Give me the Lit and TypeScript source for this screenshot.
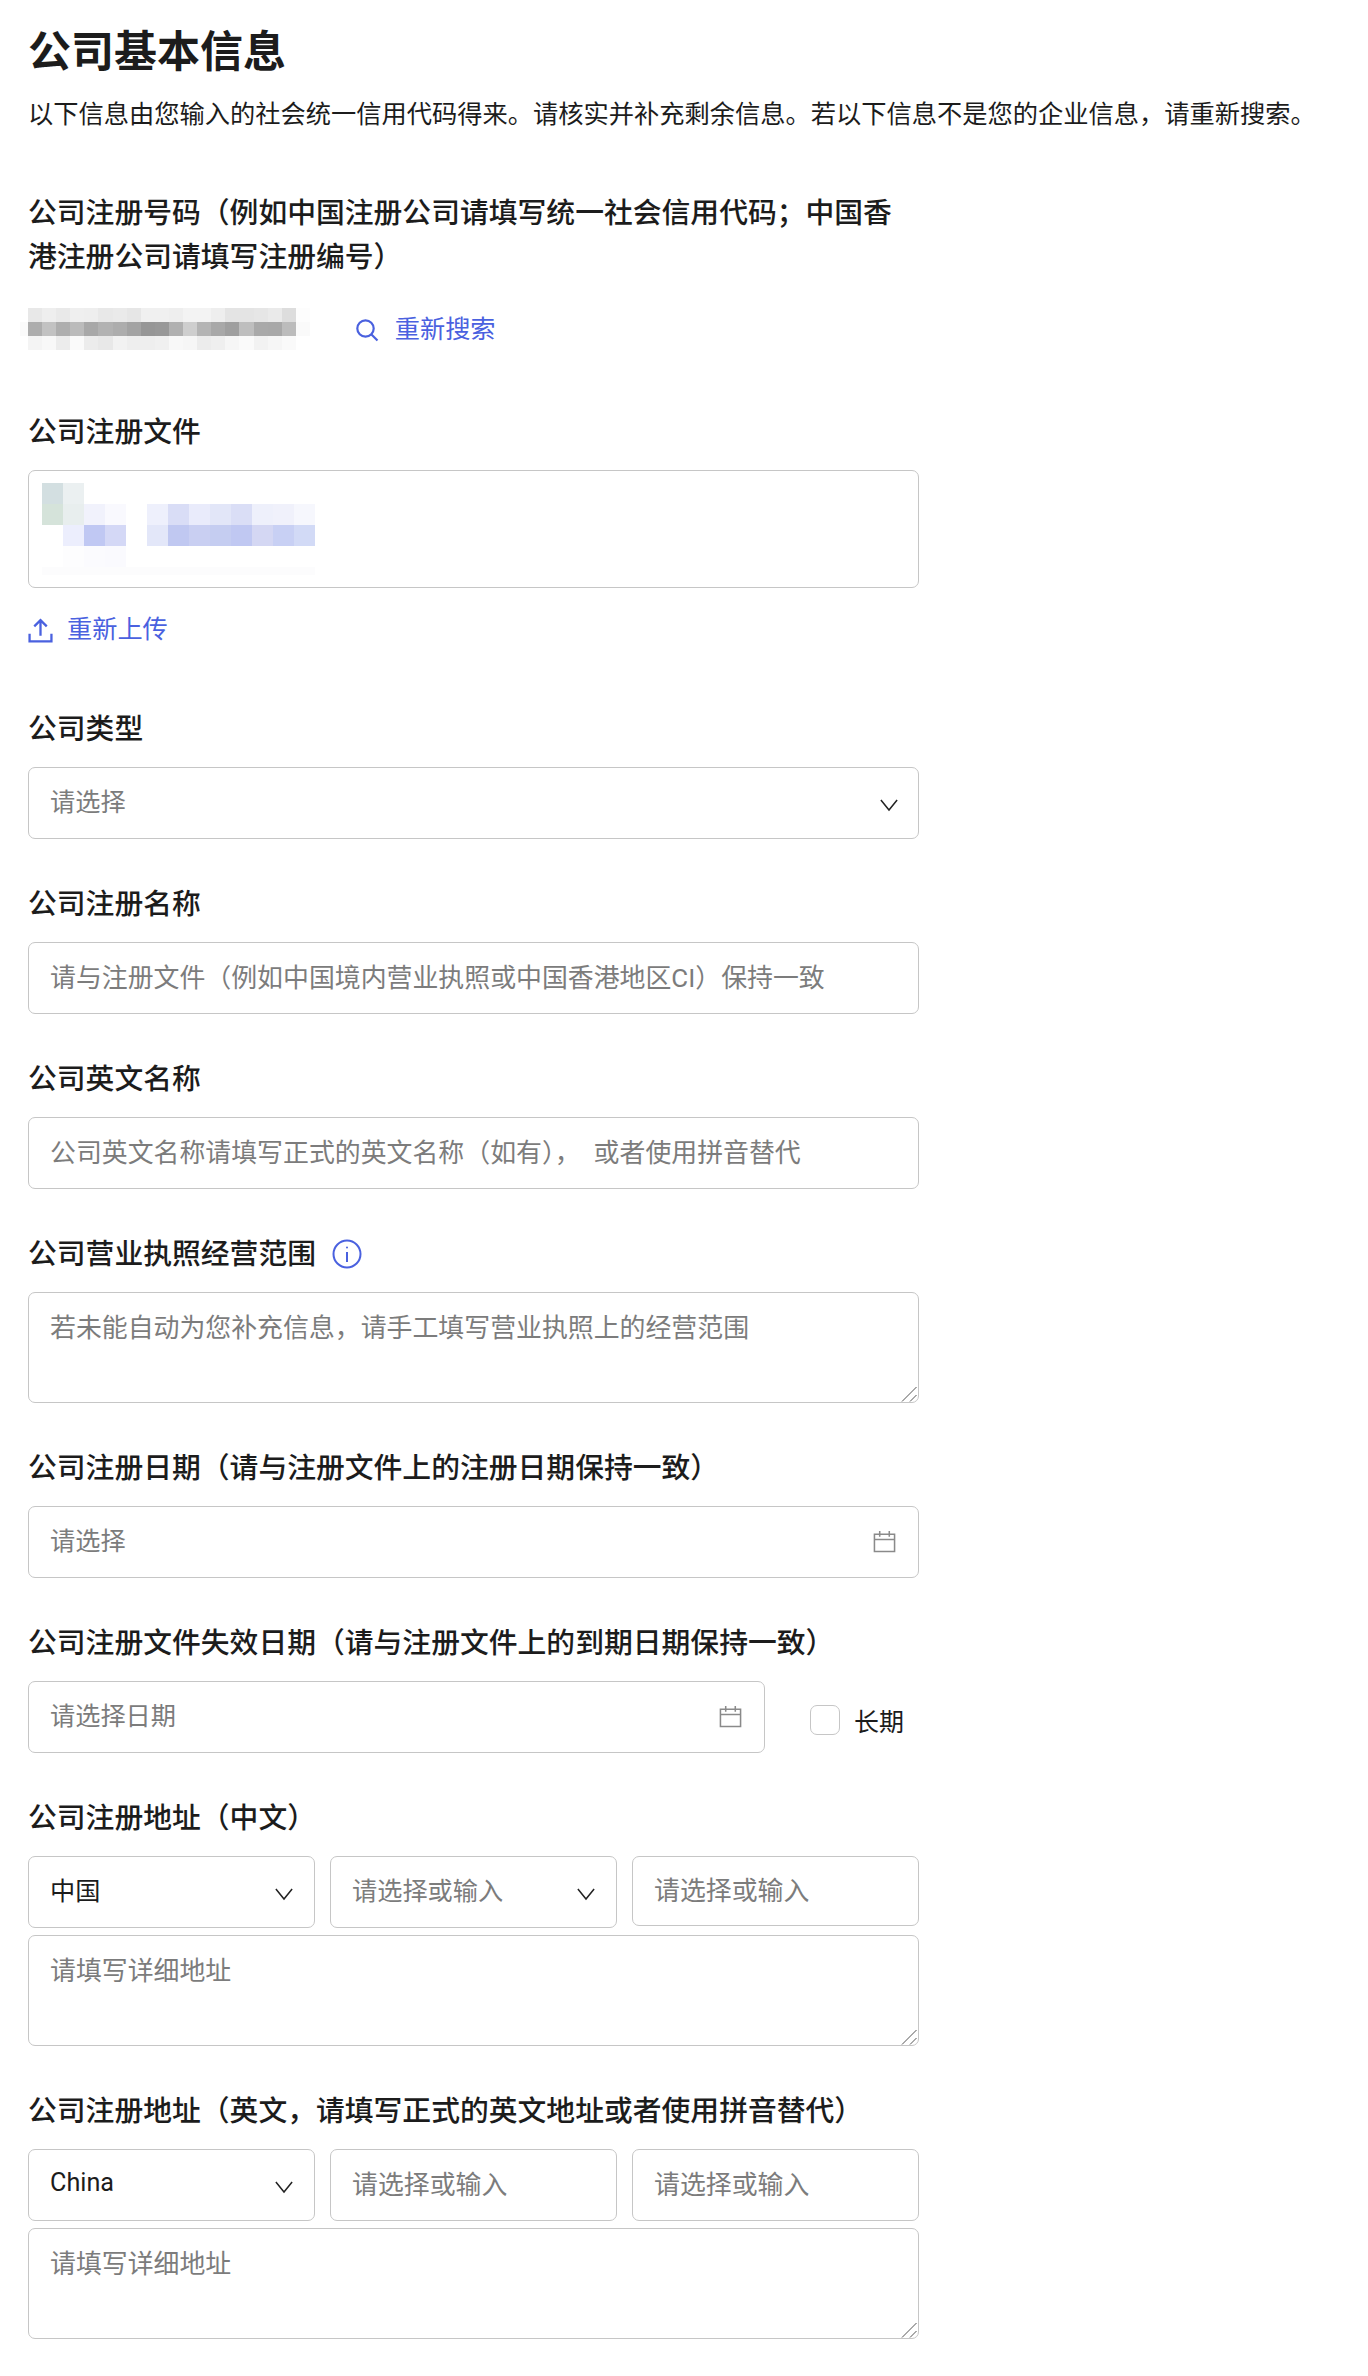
import { LitElement, html, css } from "lit";
import { customElement } from "lit/decorators.js";

const chevron = html`<svg class="chev" viewBox="0 0 20 14" fill="none" stroke="#222" stroke-width="1.7"><path d="M1 1.5l9 11 9-11"/></svg>`;
const calendar = html`<svg class="cal" viewBox="0 0 24 24" fill="none" stroke="#8a8a8a" stroke-width="1.6"><path d="M1.5 4.5h21v18h-21z"/><path d="M1.5 10h21M7 1v6M17 1v6"/></svg>`;
const handle = html`<svg class="grip" viewBox="0 0 16 16" fill="none" stroke="#555" stroke-width="1"><path d="M1 15.5L15.5 1M9 15.5L15.5 9"/></svg>`;

const numRows = [
  ["ff","e8","ee","e9","ef","ee","e8","ea","e6","f0","f0","ee","f3","f3","ee","e4","e4","e6","ea","dd","fd"],
  ["fa","ad","c2","ae","bb","a8","b2","ad","a3","96","98","b0","ce","b4","a8","9f","be","a9","a8","bc","fa"],
  ["ff","f4","f8","ec","fa","ec","e8","f2","ee","ee","f0","f8","f6","ec","ef","f6","fa","f2","f6","fa","ff"],
];
const f = "#fcfcfd";
const docRows = [
  ["#d3dfe1","#ebf0f1","","","","","","","","","","",""],
  ["#d5e3da","#e8eeee","#f1f2fc","#f9f9fe","","#eef0fc","#d9ddf6","#e9ebfb","#e2e6f8","#dadef6","#eef0fb","#f0f1fb","#f6f7fd"],
  ["","#eceefd","#c0c8f3","#d4d8f6","","#e3e7f9","#c0c8f1","#c9cff2","#c5cdf1","#c0c8f2","#d4d7f3","#c8d0f4","#d2daf6"],
  ["","#fdfdfe","#fbfbfe","#fafafe","","","","","","","","",""],
  [f,f,f,f,f,f,f,f,f,f,f,f,f],
];

@customElement("app-root")
export class AppRoot extends LitElement {
  static styles = css`
    :host {
      display: block;
      width: 1368px;
      box-sizing: border-box;
      padding: 22px 0 0 28px;
      min-height: 2376px;
      background: #fff;
      color: #1c1c1c;
      font-family: "Roboto", "Noto Sans CJK SC", sans-serif;
    }
    h1 { margin: 0; font-size: 43px; line-height: 60px; font-weight: 700; }
    .desc { margin: 11px 0 0; font-size: 25.25px; line-height: 44px; white-space: nowrap; }
    .form { width: 891px; margin-top: 53px; }
    .label {
      font-size: 28.8px; line-height: 44px; font-weight: 500; padding-top: 1px;
      display: flex; align-items: center; gap: 16px;
    }
    .wrap { width: 870px; display: block; }
    .section { margin-bottom: 42px; }
    .section.tall { margin-bottom: 59px; }
    .label + .box, .label + .row, .label + .tarea, .label + .doc, .label + .dateline { margin-top: 16px; }
    .box {
      box-sizing: border-box; height: 72px; border: 1.5px solid #c6c6c6; border-radius: 7px;
      display: flex; align-items: center; justify-content: space-between;
      padding: 0 20px 5px 21px; font-size: 25.9px; min-width: 0; background: #fff;
    }
    .box.sel { font-size: 25.2px; padding-bottom: 6px; }
    .box.date { padding-right: 22px; }
    .ph { color: #7c7c7c; white-space: pre; }
    .val { color: #1c1c1c; }
    .tarea {
      position: relative;
      box-sizing: border-box; height: 111px; border: 1.5px solid #c6c6c6; border-radius: 7px;
      padding: 18px 21px 16px; font-size: 25.9px; line-height: 34px; color: #7c7c7c;
    }
    .grip { position: absolute; right: 1px; bottom: 0; width: 16px; height: 16px; }
    .chev { width: 18px; height: 14px; flex: none; margin-top: 9px; }
    .cal { width: 23px; height: 23px; flex: none; margin-top: 5px; }
    .numline { display: flex; align-items: center; margin-top: 29px; height: 42px; margin-bottom: 59px; }
    .blur {
      display: grid; grid-template-columns: 8px repeat(19, 14.1px) 14px; grid-auto-rows: 14px;
      margin-left: -8px; flex: none;
    }
    .blur i, .docgrid i { display: block; }
    .link { display: inline-flex; align-items: center; color: #4a61df; font-size: 25.2px; line-height: 34px; white-space: nowrap; padding-top: 2px; }
    .search { margin-left: 45px; gap: 16px; }
    .search svg { width: 24px; height: 24px; }
    .upload { margin-top: 23px; gap: 14px; }
    .upload svg { width: 25px; height: 25px; }
    .doc {
      box-sizing: border-box; height: 118px; border: 1.5px solid #c6c6c6; border-radius: 7px;
      padding: 12px 0 0 12.5px;
    }
    .docgrid { display: grid; grid-template-columns: repeat(13, 21px); grid-template-rows: repeat(4, 21px) 8px; }
    .dateline { display: flex; align-items: center; }
    .dateline .box { width: 737px; flex: none; }
    .check { display: flex; align-items: center; margin: 6px 0 0 45px; font-size: 25px; gap: 14px; white-space: nowrap; }
    .check span { width: 30px; height: 30px; box-sizing: border-box; border: 1.5px solid #c6c6c6; border-radius: 7px; display: block; }
    .row { display: grid; grid-template-columns: repeat(3, 1fr); gap: 15px; margin-bottom: 7px; align-items: start; }
    .row .box { padding-right: 21px; }
    .row .flat { height: 70px; }
    .info { width: 30px; height: 30px; }
  `;

  private select(text: string, val = false) {
    return html`<div class="box sel"><span class=${val ? "val" : "ph"}>${text}</span>${chevron}</div>`;
  }

  private date(text: string) {
    return html`<div class="box sel date"><span class="ph">${text}</span>${calendar}</div>`;
  }

  private input(text: string, flat = false) {
    return html`<div class="box ${flat ? "flat" : ""}"><span class="ph">${text}</span></div>`;
  }

  private section(label: string, body: unknown) {
    return html`<div class="section"><div class="label">${label}</div>${body}</div>`;
  }

  render() {
    return html`
      <h1>公司基本信息</h1>
      <p class="desc">以下信息由您输入的社会统一信用代码得来。请核实并补充剩余信息。若以下信息不是您的企业信息，请重新搜索。</p>
      <div class="form">
        <div class="label wrap">公司注册号码（例如中国注册公司请填写统一社会信用代码；中国香港注册公司请填写注册编号）</div>
        <div class="numline">
          <div class="blur">${numRows.flat().map((c) => html`<i style="background:#${c}${c}${c}"></i>`)}</div>
          <span class="link search">
            <svg viewBox="0 0 24 24" fill="none" stroke="currentColor" stroke-width="2.2"><circle cx="10.5" cy="10.5" r="8.2"/><path d="M16.5 16.5l6 6"/></svg>重新搜索
          </span>
        </div>

        <div class="section tall">
          <div class="label">公司注册文件</div>
          <div class="doc">
            <div class="docgrid">${docRows.flat().map((c) => html`<i style="background:${c || "transparent"}"></i>`)}</div>
          </div>
          <span class="link upload">
            <svg viewBox="0 0 24 24" fill="none" stroke="currentColor" stroke-width="2.2"><path d="M12 17V2M6 8l6-6 6 6M1.5 15v7.5h21V15"/></svg>重新上传
          </span>
        </div>

        ${this.section("公司类型", this.select("请选择"))}
        ${this.section("公司注册名称", this.input("请与注册文件（例如中国境内营业执照或中国香港地区CI）保持一致"))}
        ${this.section("公司英文名称", this.input("公司英文名称请填写正式的英文名称（如有），  或者使用拼音替代"))}

        <div class="section">
          <div class="label">公司营业执照经营范围
            <svg class="info" viewBox="0 0 30 30" fill="none" stroke="#4a61df" stroke-width="2"><circle cx="15" cy="15" r="13.5"/><path d="M15 13v10"/><circle cx="15" cy="8.5" r="1" fill="#4a61df" stroke="none"/></svg>
          </div>
          <div class="tarea">若未能自动为您补充信息，请手工填写营业执照上的经营范围${handle}</div>
        </div>

        ${this.section("公司注册日期（请与注册文件上的注册日期保持一致）", this.date("请选择"))}

        <div class="section">
          <div class="label">公司注册文件失效日期（请与注册文件上的到期日期保持一致）</div>
          <div class="dateline">
            ${this.date("请选择日期")}
            <label class="check"><span></span>长期</label>
          </div>
        </div>

        <div class="section">
          <div class="label">公司注册地址（中文）</div>
          <div class="row">
            ${this.select("中国", true)}
            ${this.select("请选择或输入")}
            ${this.input("请选择或输入", true)}
          </div>
          <div class="tarea">请填写详细地址${handle}</div>
        </div>

        <div class="section">
          <div class="label">公司注册地址（英文，请填写正式的英文地址或者使用拼音替代）</div>
          <div class="row">
            ${this.select("China", true)}
            ${this.input("请选择或输入")}
            ${this.input("请选择或输入")}
          </div>
          <div class="tarea">请填写详细地址${handle}</div>
        </div>
      </div>
    `;
  }
}
